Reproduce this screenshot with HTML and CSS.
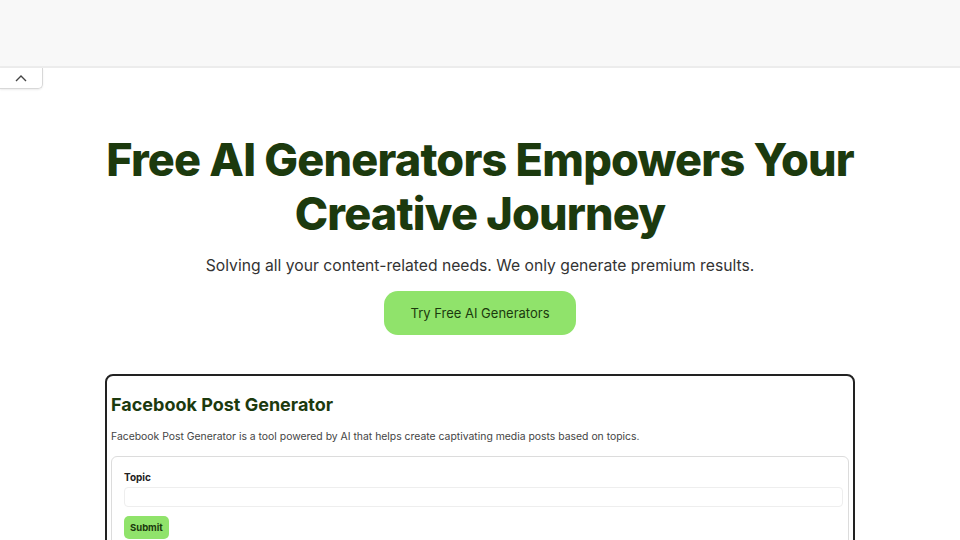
FILE: index.html
```html
<!DOCTYPE html>
<html lang="en">

<head>
    <meta charset="UTF-8">
    <meta name="viewport" content="width=device-width, initial-scale=1.0">
    <title>Free AI Generators</title>
    <link rel="stylesheet" href="styles.css">
</head>

<body>
    <!-- Top bar -->
    <header class="top-bar"></header>

    <!-- Collapse tab -->
    <div class="tab">
        <svg width="12" height="8" viewBox="0 0 12 8" fill="none" stroke="#444" stroke-width="1.4">
            <path d="M1 7 L6 2 L11 7" />
        </svg>
    </div>

    <!-- Hero -->
    <section class="hero">
        <h1>Free AI Generators Empowers Your<br>Creative Journey</h1>
        <p class="subtitle">Solving all your content-related needs. We only generate premium results.</p>
        <button class="cta">Try Free AI Generators</button>
    </section>

    <!-- Generator card -->
    <section class="card">
        <h2>Facebook Post Generator</h2>
        <p class="desc">Facebook Post Generator is a tool powered by AI that helps create captivating media posts based on topics.</p>
        <div class="form">
            <label class="label">Topic</label>
            <input class="input" type="text">
            <button class="submit">Submit</button>
        </div>
    </section>
</body>

</html>
```

FILE: styles.css
```css
/* Base */
body {
    margin: 0;
    background-color: #fff;
    font-family: Inter, "Noto Sans", sans-serif;
    color: #333;
    overflow: hidden;
}

/* Top bar */
.top-bar {
    height: 66px;
    background-color: #f8f8f8;
    border-bottom: 2px solid #ececec;
}

/* Collapse tab */
.tab {
    width: 43px;
    height: 21px;
    display: flex;
    align-items: center;
    justify-content: center;
    border: 1px solid #d8d8d8;
    border-top: none;
    border-left: none;
    border-bottom-right-radius: 5px;
    box-sizing: border-box;
    box-shadow: 0 1px 2px rgba(0, 0, 0, 0.08);
}

/* Hero */
.hero {
    display: flex;
    flex-direction: column;
    align-items: center;
    text-align: center;
    padding-top: 44px;
}

h1 {
    margin: 0;
    font-size: 45px;
    line-height: 54px;
    font-weight: 800;
    letter-spacing: -0.8px;
    color: #1c3a0e;
}

.subtitle {
    margin: 13px 0 0;
    font-size: 15.7px;
    line-height: 24px;
    color: #333;
}

.cta {
    margin-top: 13px;
    width: 192px;
    height: 44px;
    border: none;
    border-radius: 14px;
    background-color: #90e36b;
    color: #1c3a0e;
    font-family: Inter, sans-serif;
    font-size: 13px;
    cursor: pointer;
}

/* Generator card */
.card {
    margin: 39px auto 0;
    width: 750px;
    box-sizing: border-box;
    border: 2px solid #222;
    border-radius: 8px;
    padding: 17px 4px 0;
}

.card h2 {
    margin: 0;
    font-size: 18px;
    line-height: 24px;
    font-weight: 700;
    color: #1c3a0e;
}

.desc {
    margin: 12px 0 0;
    font-size: 10.4px;
    line-height: 16px;
    color: #444;
}

.form {
    margin-top: 11px;
    border: 1px solid #dcdcdc;
    border-radius: 6px;
    padding: 14px 5px 12px 12px;
    display: flex;
    flex-direction: column;
    align-items: flex-start;
}

.label {
    font-size: 10px;
    font-weight: 700;
    color: #222;
}

.input {
    margin-top: 4px;
    width: 100%;
    height: 20px;
    box-sizing: border-box;
    border: 1px solid #eee;
    border-radius: 4px;
}

.submit {
    margin-top: 9px;
    padding: 0 6px;
    height: 23px;
    border: none;
    border-radius: 5px;
    background-color: #90e36b;
    color: #1c3a0e;
    font-family: Inter, sans-serif;
    font-size: 9.5px;
    font-weight: 700;
}
```
